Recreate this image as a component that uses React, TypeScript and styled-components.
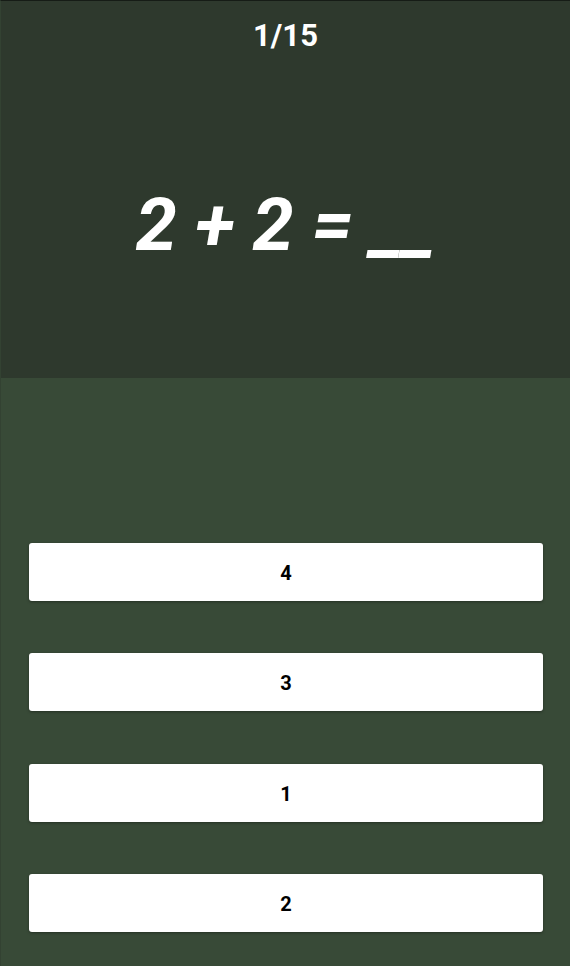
import React from "react";
import styled, { createGlobalStyle } from "styled-components";

const Global = createGlobalStyle`
  html, body { margin: 0; padding: 0; }
  body { background: #384a37; font-family: Roboto, "Liberation Sans", sans-serif; }
`;

const Page = styled.div`
  width: 570px;
  height: 966px;
  display: flex;
  flex-direction: column;
  background: #384a37;
  border-top: 1px solid #161c16;
  border-left: 1px solid #334232;
  box-sizing: border-box;
  overflow: hidden;
`;

const Header = styled.div`
  height: 377px;
  background: #2e392d;
  display: flex;
  flex-direction: column;
  align-items: center;
`;

const Counter = styled.div`
  margin-top: 15px;
  color: #fff;
  font-size: 31px;
  font-weight: 700;
  line-height: 40px;
`;

const Question = styled.div`
  margin-top: 127px;
  color: #fff;
  font-size: 74px;
  font-weight: 700;
  font-style: italic;
  line-height: 84px;
  white-space: pre;
`;

const Answers = styled.div`
  flex: 1;
  display: flex;
  flex-direction: column;
  gap: 52.4px;
  padding: 165px 27px 0 28px;
`;

const Answer = styled.button`
  height: 58px;
  padding: 2px 0 0;
  border: none;
  border-radius: 3px;
  background: #fff;
  box-shadow: 0 1px 3px rgba(0, 0, 0, 0.35);
  color: #000;
  font-family: Roboto, "Liberation Sans", sans-serif;
  font-size: 20px;
  font-weight: 700;
  cursor: pointer;
`;

export default function App() {
  const answers = ["4", "3", "1", "2"];
  return (
    <>
      <Global />
      <Page>
        <Header>
          <Counter>1/15</Counter>
          <Question>2 + 2 = __</Question>
        </Header>
        <Answers>
          {answers.map((a) => (
            <Answer key={a}>{a}</Answer>
          ))}
        </Answers>
      </Page>
    </>
  );
}
